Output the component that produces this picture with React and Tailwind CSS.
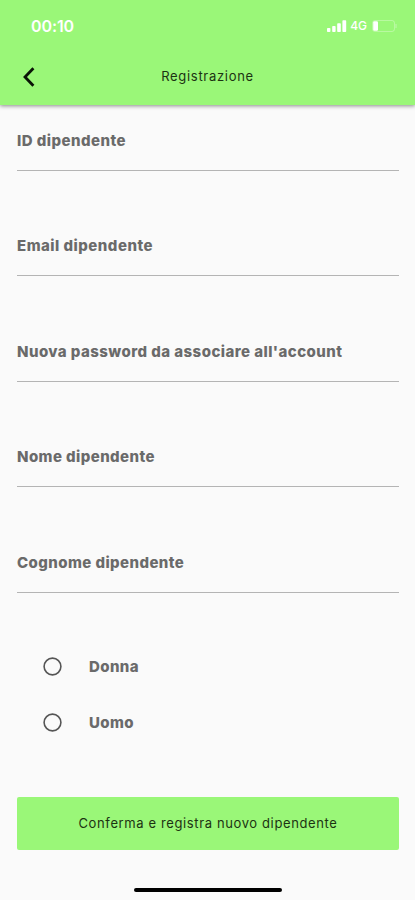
import { useState } from 'react'

const FIELDS = [
  ['id', 'ID dipendente', 'tracking-[0.46px]'],
  ['email', 'Email dipendente', 'tracking-[0.48px]'],
  ['password', "Nuova password da associare all'account", 'tracking-[0.44px]'],
  ['nome', 'Nome dipendente', 'tracking-[0.42px]'],
  ['cognome', 'Cognome dipendente', 'tracking-[0.42px]'],
]

function StatusBar() {
  return (
    <div className="flex h-[52px] items-center justify-between pl-[31px] pr-[17px] text-white">
      <span className="text-base font-semibold leading-5 tracking-[-0.1px]">00:10</span>
      <div className="flex items-center">
        <svg width="20" height="12" viewBox="0 0 20 12" fill="currentColor">
          <rect x="0" y="8" width="3.4" height="4" rx="0.8" />
          <rect x="5.2" y="6" width="3.4" height="6" rx="0.8" />
          <rect x="10.2" y="3.2" width="3.6" height="8.8" rx="0.8" />
          <rect x="15.4" y="0.2" width="3.8" height="11.8" rx="0.8" />
        </svg>
        <span className="ml-[3px] text-[12px] font-medium leading-3">4G</span>
        <svg className="ml-[5px]" width="26" height="12" viewBox="0 0 26 12" fill="none">
          <rect x="0.5" y="0.5" width="22" height="11" rx="2.5" stroke="white" strokeOpacity="0.3" />
          <rect x="1.2" y="1.2" width="4.8" height="9.6" rx="1.2" fill="white" />
          <path d="M24 4 V8" stroke="white" strokeOpacity="0.3" strokeWidth="1.3" />
        </svg>
      </div>
    </div>
  )
}

function Header() {
  return (
    <header className="h-[105px] bg-[#9af778] shadow-[0_1px_4px_rgba(0,0,0,0.45)]">
      <StatusBar />
      <div className="grid h-12 grid-cols-[1fr_auto_1fr] items-center">
        <button className="ml-[22px] mt-px w-4" aria-label="Indietro">
          <svg width="14" height="20" viewBox="0 0 14 20" fill="none" stroke="#0a1406" strokeWidth="2.8">
            <path d="M11.4 1.2 L3 10 L11.4 18.8" />
          </svg>
        </button>
        <h1 className="text-[13px] leading-5 tracking-[0.7px] text-[#1c3312]">Registrazione</h1>
      </div>
    </header>
  )
}

export default function App() {
  const [sesso, setSesso] = useState(null)

  return (
    <div className="flex h-[900px] w-[415px] flex-col overflow-hidden bg-[#fafafa] font-['Inter',sans-serif]">
      <Header />

      <main className="pl-[17px] pr-4">
        {FIELDS.map(([key, label, tracking], i) => (
          <div key={key} className={`flex flex-col justify-end border-b border-[#b4b4b4] pb-[19px] ${i === 0 ? 'h-[66px]' : 'h-[105.4px]'}`}>
            <span className={`whitespace-nowrap text-[15px] font-extrabold leading-5 text-[#6a6a6a] ${tracking}`}>{label}</span>
          </div>
        ))}

        <div className="mt-[46px]">
          {['Donna', 'Uomo'].map(s => (
            <button key={s} onClick={() => setSesso(s)} className="flex h-14 w-full items-center pl-[26px]">
              <svg width="19" height="19" viewBox="0 0 19 19" fill="none">
                <circle cx="9.5" cy="9.5" r="8.4" stroke="#555" strokeWidth="1.6" />
                {sesso === s && <circle cx="9.5" cy="9.5" r="4.8" fill="#555" />}
              </svg>
              <span className="ml-[27px] text-[15px] font-extrabold leading-5 tracking-[0.4px] text-[#6a6a6a]">{s}</span>
            </button>
          ))}
        </div>

        <button className="mt-[46px] flex h-[53px] w-full items-center justify-center rounded-[2px] bg-[#9af778] pt-0.5 text-[13px] tracking-[0.62px] text-[#1c3312]">
          Conferma e registra nuovo dipendente
        </button>
      </main>

      <div className="mx-auto mb-[8px] mt-auto h-1 w-[148px] rounded-full bg-black" />
    </div>
  )
}
